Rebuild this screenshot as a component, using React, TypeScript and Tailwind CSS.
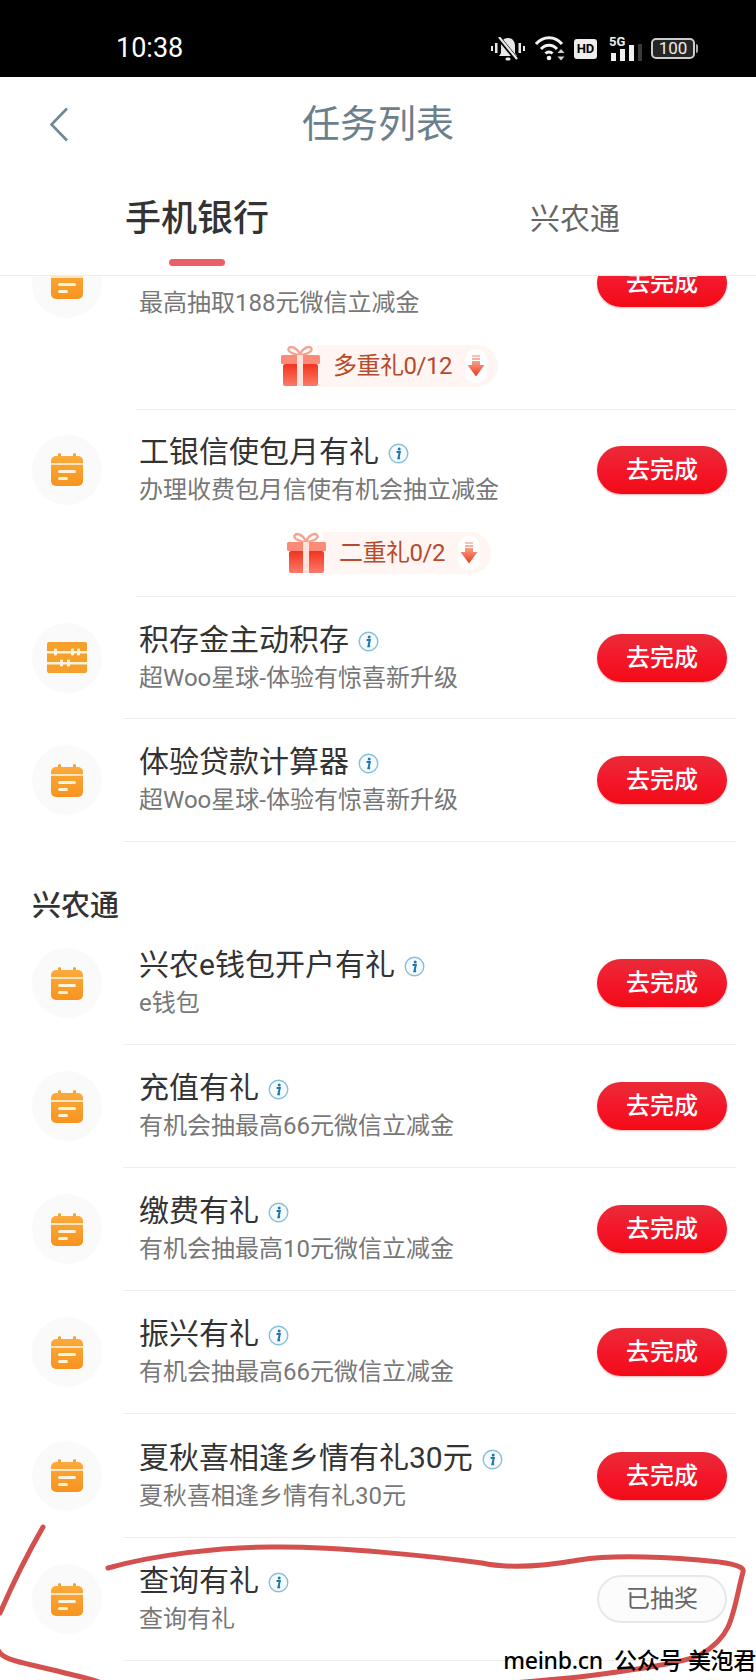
import React from "react";

interface Task {
  title: string;
  desc: string;
  icon?: "calendar" | "abacus";
  done?: boolean;
  pill?: string;
  pillPad?: string;
  inset?: boolean;
  height?: string;
}

const bankTasks: Task[] = [
  {
    // the title of this row is scrolled away under the tabs
    title: "",
    desc: "最高抽取188元微信立减金",
    pill: "多重礼0/12",
    pillPad: "pl-[144px]",
    inset: true,
    height: "h-[119px]",
  },
  {
    title: "工银信使包月有礼",
    desc: "办理收费包月信使有机会抽立减金",
    pill: "二重礼0/2",
    pillPad: "pl-[150px]",
    inset: true,
    height: "h-[119px]",
  },
  { title: "积存金主动积存", desc: "超Woo星球-体验有惊喜新升级", icon: "abacus", height: "h-[121px]" },
  { title: "体验贷款计算器", desc: "超Woo星球-体验有惊喜新升级" },
];

const xingnongTasks: Task[] = [
  { title: "兴农e钱包开户有礼", desc: "e钱包" },
  { title: "充值有礼", desc: "有机会抽最高66元微信立减金" },
  { title: "缴费有礼", desc: "有机会抽最高10元微信立减金" },
  { title: "振兴有礼", desc: "有机会抽最高66元微信立减金" },
  { title: "夏秋喜相逢乡情有礼30元", desc: "夏秋喜相逢乡情有礼30元", height: "h-[123px]" },
  { title: "查询有礼", desc: "查询有礼", done: true },
];

const CalendarIcon = () => (
  <svg width="32" height="33" viewBox="0 0 32 33">
    <defs>
      <linearGradient id="cal" x1="0" y1="0" x2="0" y2="1">
        <stop offset="0" stopColor="#fbaa3c" />
        <stop offset="1" stopColor="#f7931e" />
      </linearGradient>
    </defs>
    <rect x="7" y="0" width="3" height="6" rx="1.5" fill="#f9a02c" />
    <rect x="22" y="0" width="3" height="6" rx="1.5" fill="#f9a02c" />
    <rect x="0" y="3" width="32" height="30" rx="5" fill="url(#cal)" />
    <rect x="0" y="10" width="32" height="2" fill="#fde6c0" />
    <rect x="7" y="17" width="18" height="3" rx="1.5" fill="#fff3dc" />
    <rect x="7" y="24" width="10" height="3" rx="1.5" fill="#fff3dc" />
  </svg>
);

const AbacusIcon = () => (
  <svg width="40" height="31" viewBox="0 0 40 31">
    <rect x="0" y="0" width="40" height="31" rx="2" fill="#f5a02a" />
    <rect x="0" y="9" width="40" height="2.500" fill="#fff3dc" />
    <rect x="0" y="20" width="40" height="2.500" fill="#fff3dc" />
    <rect x="7" y="6.500" width="3" height="7" rx="1" fill="#fff3dc" />
    <rect x="24" y="6.500" width="3" height="7" rx="1" fill="#fff3dc" />
    <rect x="30" y="6.500" width="3" height="7" rx="1" fill="#fff3dc" />
    <rect x="13" y="17.500" width="3" height="7" rx="1" fill="#fff3dc" />
    <rect x="20" y="17.500" width="3" height="7" rx="1" fill="#fff3dc" />
  </svg>
);

const InfoIcon = () => (
  <svg width="21" height="21" viewBox="0 0 21 21" className="ml-[9px] mt-[3px] shrink-0">
    <circle cx="10.5" cy="10.5" r="9.3" fill="#f5fbfe" stroke="#86c0da" strokeWidth="1.4" />
    <circle cx="11.2" cy="5.9" r="1.5" fill="#1f76ad" />
    <path d="M8.600 9h3.200l-1.400 6.200h1.700" fill="none" stroke="#1f76ad" strokeWidth="2" />
  </svg>
);

const GiftIcon = () => (
  <svg width="41" height="41" viewBox="0 0 41 41">
    <defs>
      <linearGradient id="gift" x1="0" y1="0" x2="0" y2="1">
        <stop offset="0" stopColor="#f2331f" />
        <stop offset="1" stopColor="#fb7a68" />
      </linearGradient>
    </defs>
    <path d="M20 9C16 2 11 1 9 3c-2 2 1 6 11 7 10-1 13-5 11-7-2-2-7-1-11 6z" fill="none" stroke="#f6a394" strokeWidth="2.4" />
    <rect x="1" y="10" width="39" height="9" rx="1.5" fill="#fb8a78" />
    <rect x="3" y="19" width="35" height="22" rx="2" fill="url(#gift)" />
    <rect x="17" y="10" width="6" height="31" fill="#fde3dc" />
  </svg>
);

const DownArrow = () => (
  <svg width="18" height="22" viewBox="0 0 18 22">
    <defs>
      <linearGradient id="arrow" x1="0" y1="0" x2="0" y2="1">
        <stop offset="0" stopColor="#f9a08a" />
        <stop offset="1" stopColor="#e9391c" />
      </linearGradient>
    </defs>
    <rect x="5" y="0" width="8" height="2" fill="#f9c3b4" />
    <rect x="5" y="3" width="8" height="2" fill="#f9b09c" />
    <path d="M5 6h8v4h4.500L9 21.500.5 10H5z" fill="url(#arrow)" />
  </svg>
);

const MuteIcon = () => (
  <svg width="34" height="24" viewBox="0 0 34 24" fill="#e8e8e8">
    <rect x="0" y="9" width="2" height="5" />
    <rect x="4" y="6" width="2.5" height="10" />
    <rect x="27.5" y="6" width="2.5" height="10" />
    <rect x="32" y="9" width="2" height="5" />
    <path d="M17 1c4.500 0 7 3.500 7 8v7l2 3H8l2-3V9c0-4.500 2.500-8 7-8z" />
    <rect x="14.500" y="20.500" width="5" height="3" rx="1.500" />
    <path d="M8 1l18 22" stroke="#000" strokeWidth="4.500" />
    <path d="M8 0l18 22" stroke="#e8e8e8" strokeWidth="2.200" />
  </svg>
);

const WifiIcon = () => (
  <svg width="30" height="25" viewBox="0 0 30 25" fill="none" stroke="#f2f2f2" strokeWidth="3">
    <path d="M1 8c7-8.500 19-8.500 26 0" />
    <path d="M6 13c4.500-5 11.500-5 16 0" />
    <path d="M10.500 17.500c2-2 5-2 7 0" />
    <circle cx="14" cy="22" r="2.300" fill="#f2f2f2" stroke="none" />
    <path d="M26 13l3.500 4h-7zM26 24.500l3.500-4h-7z" fill="#d0d0d0" stroke="none" />
  </svg>
);

const SignalBars = () => (
  <svg width="32" height="17" viewBox="0 0 32 17">
    <rect x="0" y="9" width="5" height="8" fill="#f0f0f0" />
    <rect x="9" y="5" width="5" height="12" fill="#f0f0f0" />
    <rect x="18" y="1" width="5" height="16" fill="#f0f0f0" />
    <rect x="27" y="0" width="4" height="17" fill="#3a3a3a" />
  </svg>
);

const StatusBar = () => (
  <div className="flex h-[77px] items-center bg-black pt-5 pl-[116px] pr-[58px]">
    <span className="text-[27px] leading-none text-white">10:38</span>
    <div className="ml-auto flex items-center">
      <MuteIcon />
      <div className="ml-[10px]">
        <WifiIcon />
      </div>
      <span className="ml-[9px] flex h-[20px] w-[23px] items-center justify-center rounded-[3px] bg-[#eee] text-[13px] font-bold leading-none text-black">
        HD
      </span>
      <div className="relative ml-[12px] h-[24px] w-[34px]">
        <span className="absolute left-0 top-[-2px] text-[13px] font-bold leading-none text-[#eee]">5G</span>
        <div className="absolute bottom-0 left-[2px]">
          <SignalBars />
        </div>
      </div>
      <div className="ml-[8px] flex items-center">
        <span className="flex h-[21px] w-[44px] items-center justify-center rounded-[5px] border-2 border-[#ccc] bg-[#262626] text-[17px] leading-none text-[#eee]">
          100
        </span>
        <span className="ml-[1px] h-[9px] w-[2px] rounded-r bg-[#aaa]" />
      </div>
    </div>
  </div>
);

const Header = () => (
  <div className="border-b border-[#ececec] bg-white">
    <div className="grid h-[94px] grid-cols-[1fr_auto_1fr] items-center">
      <svg width="20" height="35" viewBox="0 0 20 35" className="ml-[49px]" fill="none" stroke="#6f8795" strokeWidth="2.600">
        <path d="M18 1.500L2.500 17.500 18 33.500" />
      </svg>
      <h1 className="text-[38px] leading-none text-[#6b808c]">任务列表</h1>
      <div />
    </div>
    <div className="grid h-[104px] grid-cols-[394px_362px]">
      <div className="flex flex-col items-center pt-7">
        <span className="text-[36px] font-medium leading-[40px] text-[#333]">手机银行</span>
        <span className="mt-5 h-[7px] w-[56px] rounded-full bg-[#ea6069]" />
      </div>
      <div className="flex justify-center pt-7">
        <span className="text-[30px] leading-[40px] text-[#666]">兴农通</span>
      </div>
    </div>
  </div>
);

const TaskRow = ({ task }: { task: Task }) => {
  const mainHeight = task.height ?? "h-[122px]";
  return (
    <div className="flex pl-8 pr-5">
      <div className={`flex w-[91px] shrink-0 items-center ${mainHeight}`}>
        <div className="flex h-[70px] w-[70px] items-center justify-center rounded-full bg-[#fafafa]">
          {task.icon === "abacus" ? <AbacusIcon /> : <CalendarIcon />}
        </div>
      </div>
      <div className={`flex-1 border-b border-[#efefef] ${task.inset ? "ml-[13px]" : ""}`}>
        <div className={`flex items-center ${mainHeight} ${task.inset ? "pl-[3px]" : "pl-4"} pr-[9px]`}>
          <div className="min-w-0 flex-1">
            <div className="flex h-[40px] items-center text-[30px] leading-[40px] text-[#333]">
              {task.title}
              {task.title && <InfoIcon />}
            </div>
            <div className="text-[24px] leading-[36px] text-[#777]">{task.desc}</div>
          </div>
          {task.done ? (
            <button className="h-[48px] w-[130px] rounded-full border-2 border-[#e8e8e8] bg-[#fcfcfc] text-[24px] text-[#666]">
              已抽奖
            </button>
          ) : (
            <button className="h-[48px] w-[130px] rounded-full bg-gradient-to-b from-[#e92a38] via-[#f4162a] to-[#f20a14] text-[24px] font-medium text-white shadow-[0_1px_2px_rgba(200,0,20,0.3)]">
              去完成
            </button>
          )}
        </div>
        {task.pill && (
          <div className={`flex h-[67px] pb-[20px] ${task.pillPad}`}>
            <div className="flex items-center">
              <div className="relative z-10">
                <GiftIcon />
              </div>
              <div className="-ml-[4px] flex h-[42px] items-center rounded-r-full bg-[#fff5f2] pl-[16px] pr-[11px]">
                <span className="text-[24px] leading-none tracking-[-0.5px] text-[#b54a2c]">{task.pill}</span>
                <span className="ml-[13px] flex h-[34px] w-[22px] items-center justify-center rounded-full bg-white">
                  <DownArrow />
                </span>
              </div>
            </div>
          </div>
        )}
      </div>
    </div>
  );
};

export default function App() {
  return (
    <div
      className="relative flex h-[1680px] w-[756px] flex-col overflow-hidden bg-white"
      style={{ fontFamily: 'Roboto, "Noto Sans CJK SC", sans-serif' }}
    >
      <StatusBar />
      <Header />
      <div className="flex-1 overflow-hidden">
        <div className="-mt-[53px]">
          {bankTasks.map((task) => (
            <TaskRow key={task.desc + task.title} task={task} />
          ))}
          <div className="h-[80px] pl-8 pt-[44px] text-[29px] font-medium leading-[40px] text-[#333]">兴农通</div>
          {xingnongTasks.map((task) => (
            <TaskRow key={task.title} task={task} />
          ))}
        </div>
      </div>

      {/* red pen circle drawn on top of the screenshot */}
      <svg className="pointer-events-none absolute left-0 top-0" width="756" height="1680" viewBox="0 0 756 1680" fill="none" stroke="#d4504f" strokeWidth="5" strokeLinecap="round">
        <path d="M43 1527C24 1560 10 1590 0 1613" />
        <path d="M-2 1650C2 1660 20 1662 53 1670C72 1675 90 1678 104 1684" />
        <path d="M108 1568C150 1556 220 1546 280 1547C340 1547 430 1556 482 1563C510 1569 545 1566 579 1560C610 1555 650 1556 699 1560C725 1562 745 1565 743 1572C738 1590 735 1612 728 1627C722 1640 712 1648 700 1655C680 1664 620 1672 579 1677C550 1680 525 1682 500 1684" />
      </svg>

      <div className="absolute bottom-[5px] right-0 whitespace-nowrap text-[23px] font-medium leading-[30px] tracking-[-0.3px] text-black" style={{ fontFamily: '"Noto Sans", "Noto Sans CJK SC", sans-serif' }}>
        meinb.cn&nbsp; 公众号 美泡君
      </div>
    </div>
  );
}
